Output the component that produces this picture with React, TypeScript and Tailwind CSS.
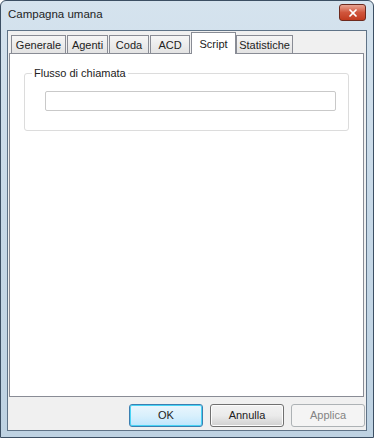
import { X } from "lucide-react";

const tabs = [
  { label: "Generale", w: "w-[55px]" },
  { label: "Agenti", w: "w-[41px]" },
  { label: "Coda", w: "w-[40px]" },
  { label: "ACD", w: "w-[40px]" },
  { label: "Script", w: "w-[45px]", active: true },
  { label: "Statistiche", w: "w-[57px]" },
];

export default function App() {
  return (
    <div className="w-[374px] h-[438px] overflow-hidden bg-white font-['Liberation_Sans',Arial,sans-serif] text-[11px] text-[#222]">
      <div className="w-full h-full flex flex-col rounded-t-[6px] border border-[#3c4f63] bg-gradient-to-b from-[#d5e3ee] via-[#c6d8e7] to-[#bed2e2]">
        {/* title bar */}
        <div className="h-[29px] shrink-0 flex items-center justify-between pl-[7px] pr-[7px]">
          <span className="text-[11.5px] text-[#1e1e1e] -mt-[1px]">Campagna umana</span>
          <button className="w-[27px] h-[17px] -mt-[6px] rounded-[3px] border border-[#6d2a1e] bg-gradient-to-b from-[#e8a493] via-[#d0553c] to-[#c13a1e] flex items-center justify-center">
            <X className="w-[12px] h-[12px] text-white" strokeWidth={3.5} />
          </button>
        </div>
        {/* client */}
        <div className="flex-1 mx-[6px] mb-[6px] border border-[#5f7387] bg-[#f0f0f0] flex flex-col">
          {/* tabs */}
          <div className="h-[22px] flex items-end pl-[3px] relative z-10">
            {tabs.map((t) =>
              t.active ? (
                <div
                  key={t.label}
                  className={`${t.w} h-[22px] -mb-[1px] bg-white border border-b-0 border-[#898c95] flex justify-center pt-[3px]`}
                >
                  {t.label}
                </div>
              ) : (
                <div
                  key={t.label}
                  className={`${t.w} h-[18px] mr-px bg-gradient-to-b from-[#f6f6f6] to-[#e3e3e3] border border-[#898c95] border-b-0 flex items-center justify-center pt-[1px]`}
                >
                  {t.label}
                </div>
              )
            )}
          </div>
          {/* panel */}
          <div className="h-[344px] mx-px mr-[2px] bg-white border border-[#898c95] px-[14px] pt-[19px]">
            <div className="relative h-[58px] border border-[#dcdcdc] rounded-[3px]">
              <span className="absolute -top-[8px] left-[7px] bg-white px-[2px] leading-[14px]">
                Flusso di chiamata
              </span>
              <div className="ml-[20px] mr-[12px] mt-[17px] h-[20px] border border-[#c9c9c9] rounded-[2px] bg-white" />
            </div>
          </div>
          {/* buttons */}
          <div className="flex-1 flex justify-end items-start gap-[7px] pt-[7px] pr-px">
            <button className="w-[74px] h-[23px] rounded-[3px] border border-[#3c7fb1] bg-gradient-to-b from-[#eaf6fd] via-[#d9f0fc] to-[#bee6fd] shadow-[inset_0_0_0_1px_#48d4f5]">
              OK
            </button>
            <button className="w-[74px] h-[23px] rounded-[3px] border border-[#707070] bg-gradient-to-b from-[#f2f2f2] via-[#ebebeb] to-[#d0d0d0] shadow-[inset_0_0_0_1px_#fcfcfc]">
              Annulla
            </button>
            <button className="w-[74px] h-[23px] rounded-[3px] border border-[#adb2b5] bg-[#f4f4f4] text-[#838383]">
              Applica
            </button>
          </div>
        </div>
      </div>
    </div>
  );
}
